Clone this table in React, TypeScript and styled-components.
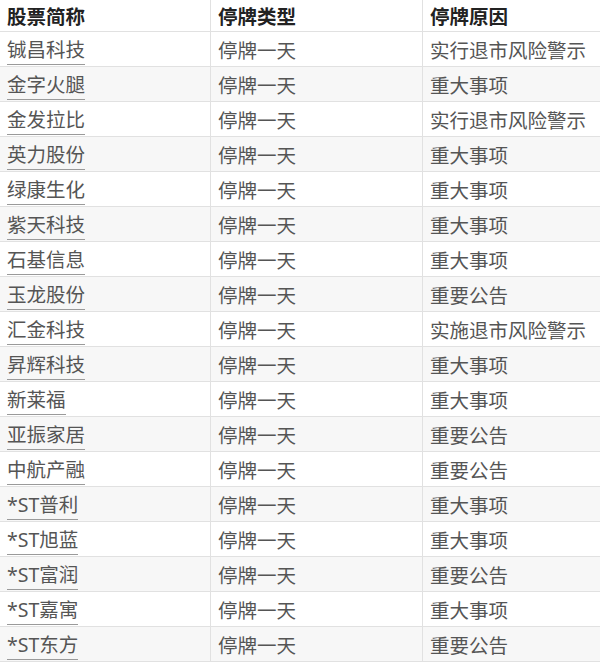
import React from "react";
import styled, { createGlobalStyle } from "styled-components";

const GlobalStyle = createGlobalStyle`
  html, body { margin: 0; padding: 0; background: #ffffff; }
  body { font-family: "Noto Sans", "Noto Sans CJK SC", sans-serif; }
`;

const Table = styled.div`
  width: 600px;
  display: flex;
  flex-direction: column;
`;

const Row = styled.div<{ $head?: boolean; $alt?: boolean }>`
  display: grid;
  grid-template-columns: 210px 212px 178px;
  height: ${(p) => (p.$head ? 32 : 35)}px;
  box-sizing: border-box;
  border-bottom: 1px solid #e1e1e1;
  background: ${(p) => (p.$alt ? "#f7f7f7" : "#ffffff")};
`;

const Cell = styled.div<{ $head?: boolean; $first?: boolean }>`
  display: flex;
  align-items: center;
  box-sizing: border-box;
  padding: 0 6px 0 7px;
  border-left: ${(p) => (p.$first ? "none" : "1px solid #e1e1e1")};
  font-size: 19.5px;
  white-space: nowrap;
  font-weight: ${(p) => (p.$head ? 700 : 400)};
  color: ${(p) => (p.$head ? "#222222" : "#555555")};
`;

const Name = styled.span`
  color: #555555;
  border-bottom: 1px solid #9a9a9a;
  padding-bottom: 1px;
`;

const rows: [string, string][] = [
  ["铖昌科技", "实行退市风险警示"],
  ["金字火腿", "重大事项"],
  ["金发拉比", "实行退市风险警示"],
  ["英力股份", "重大事项"],
  ["绿康生化", "重大事项"],
  ["紫天科技", "重大事项"],
  ["石基信息", "重大事项"],
  ["玉龙股份", "重要公告"],
  ["汇金科技", "实施退市风险警示"],
  ["昇辉科技", "重大事项"],
  ["新莱福", "重大事项"],
  ["亚振家居", "重要公告"],
  ["中航产融", "重要公告"],
  ["*ST普利", "重大事项"],
  ["*ST旭蓝", "重大事项"],
  ["*ST富润", "重要公告"],
  ["*ST嘉寓", "重大事项"],
  ["*ST东方", "重要公告"],
];

export default function App() {
  return (
    <>
      <GlobalStyle />
      <Table>
        <Row $head>
          <Cell $head $first>股票简称</Cell>
          <Cell $head>停牌类型</Cell>
          <Cell $head>停牌原因</Cell>
        </Row>
        {rows.map(([name, reason], i) => (
          <Row key={name} $alt={i % 2 === 1}>
            <Cell $first>
              <Name>{name}</Name>
            </Cell>
            <Cell>停牌一天</Cell>
            <Cell>{reason}</Cell>
          </Row>
        ))}
      </Table>
    </>
  );
}
